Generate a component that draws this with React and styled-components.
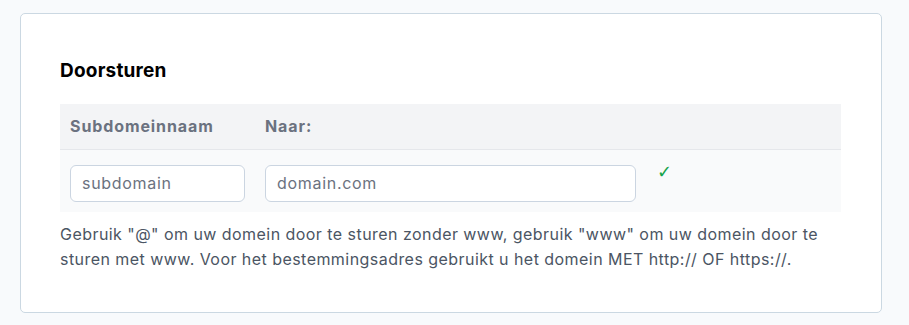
import React from "react";
import styled, { createGlobalStyle } from "styled-components";

const Global = createGlobalStyle`
  html, body { margin: 0; padding: 0; background: #f8fafc; }
  body { font-family: "Inter", "Noto Sans", sans-serif; }
  * { box-sizing: border-box; }
`;

const Page = styled.div`
  padding: 13px 27px 12px 20px;
`;

const Card = styled.section`
  background: #ffffff;
  border: 1px solid #cbd8e2;
  border-radius: 5px;
  padding: 45px 40px 40px 39px;
`;

const Title = styled.h2`
  margin: 0 0 21px;
  font-size: 19px;
  font-weight: 700;
  letter-spacing: 0.2px;
  color: #000000;
  line-height: 24px;
`;

const Table = styled.table`
  width: 100%;
  border-collapse: collapse;
`;

const HeadRow = styled.tr`
  background: #f3f4f6;
  border-bottom: 1px solid #e5e7eb;
`;

const Th = styled.th`
  text-align: left;
  padding: 0 10px;
  height: 45px;
  font-size: 16px;
  font-weight: 700;
  letter-spacing: 0.9px;
  color: #6b7280;
  width: ${(p) => p.$w || "auto"};
`;

const BodyRow = styled.tr`
  background: #f9fafb;
`;

const Td = styled.td`
  padding: 15px 10px 10px;
  vertical-align: top;
`;

const Input = styled.input`
  display: block;
  width: 100%;
  height: 37px;
  border: 1px solid #cbd5e1;
  border-radius: 6px;
  background: #ffffff;
  padding: 0 11px;
  font-family: inherit;
  font-size: 16px;
  letter-spacing: 0.7px;
  color: #6b7280;
  outline: none;
  &::placeholder { color: #6b7280; }
`;

const Check = styled.span`
  display: block;
  margin: -2px 0 0 1px;
  color: #16a34a;
  font-size: 18px;
  font-weight: 700;
  line-height: 18px;
  font-family: "DejaVu Sans", sans-serif;
`;

const Help = styled.p`
  margin: 10px 0 0;
  font-size: 16px;
  letter-spacing: 0.45px;
  line-height: 25px;
  color: #4b5563;
`;

export default function App() {
  return (
    <>
      <Global />
      <Page>
        <Card>
          <Title>Doorsturen</Title>
          <Table>
            <thead>
              <HeadRow>
                <Th $w="195px">Subdomeinnaam</Th>
                <Th $w="391px">Naar:</Th>
                <Th />
              </HeadRow>
            </thead>
            <tbody>
              <BodyRow>
                <Td>
                  <Input defaultValue="subdomain" />
                </Td>
                <Td>
                  <Input defaultValue="domain.com" />
                </Td>
                <Td>
                  <Check>✓</Check>
                </Td>
              </BodyRow>
            </tbody>
          </Table>
          <Help>
            Gebruik "@" om uw domein door te sturen zonder www, gebruik "www" om uw domein door te
            sturen met www. Voor het bestemmingsadres gebruikt u het domein MET http:// OF https://.
          </Help>
        </Card>
      </Page>
    </>
  );
}
